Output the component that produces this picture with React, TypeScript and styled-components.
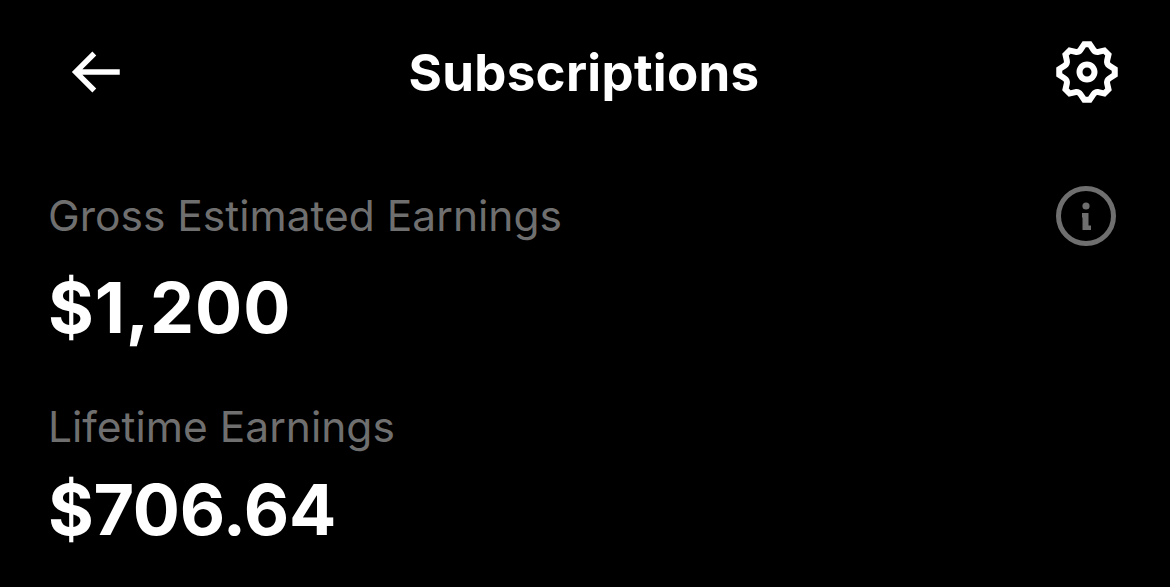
import React from 'react';
import styled, { createGlobalStyle } from 'styled-components';

const GlobalStyle = createGlobalStyle`
  html, body {
    margin: 0;
    background: #000;
  }
`;

const Page = styled.div`
  width: 1170px;
  height: 587px;
  overflow: hidden;
  background: #000;
  color: #fff;
  font-family: 'Inter', 'Liberation Sans', sans-serif;
  padding: 36px 54px 0 48px;
  box-sizing: border-box;
`;

const Header = styled.header`
  display: grid;
  grid-template-columns: 1fr auto 1fr;
  align-items: center;
  height: 72px;
`;

const Title = styled.h1`
  margin: 2px 0 0 4px;
  font-size: 51px;
  font-weight: 700;
  line-height: 70px;
  letter-spacing: 0.3px;
`;

const BackIcon = styled.svg`
  display: block;
  width: 66px;
  height: 66px;
  margin-left: 14px;
  fill: #fff;
`;

const SettingsIcon = styled.svg`
  display: block;
  width: 72px;
  height: 72px;
  justify-self: end;
  margin-right: -6.5px;
  fill: #fff;
`;

const Stat = styled.section<{ $top: number }>`
  margin-top: ${(p) => p.$top}px;
`;

const LabelRow = styled.div`
  display: flex;
  align-items: center;
  justify-content: space-between;
`;

const Label = styled.div`
  font-size: 42.5px;
  line-height: 42px;
  font-weight: 400;
  color: #6f6f6f;
`;

const InfoIcon = styled.svg`
  display: block;
  width: 60px;
  height: 60px;
  fill: none;
  stroke: #6f6f6f;
`;

const Amount = styled.div<{ $spacing: number }>`
  font-size: 70px;
  font-weight: 700;
  line-height: 80px;
  margin-top: 22px;
  letter-spacing: ${(p) => p.$spacing}px;
`;

export default function App() {
  return (
    <>
      <GlobalStyle />
      <Page>
        <Header>
          <BackIcon viewBox="0 0 24 24">
            <path d="M7.414 13l5.043 5.04-1.414 1.42L3.586 12l7.457-7.46 1.414 1.42L7.414 11H21v2H7.414z" />
          </BackIcon>
          <Title>Subscriptions</Title>
          <SettingsIcon viewBox="0 0 24 24">
            <path d="M10.54 1.75h2.92l1.57 2.36c.11.17.32.25.53.21l2.53-.59 2.17 2.17-.58 2.54c-.05.2.04.41.21.53l2.36 1.57v2.92l-2.36 1.57c-.17.12-.26.33-.21.53l.58 2.54-2.17 2.17-2.53-.59c-.21-.04-.42.04-.53.21l-1.57 2.36h-2.92l-1.58-2.36c-.11-.17-.32-.25-.52-.21l-2.54.59-2.17-2.17.58-2.54c.05-.2-.03-.41-.21-.53l-2.35-1.57v-2.92L4.1 8.97c.18-.12.26-.33.21-.53L3.73 5.9 5.9 3.73l2.54.59c.2.04.41-.04.52-.21l1.58-2.36zm1.07 2l-.98 1.47C10.05 6.08 9 6.5 7.99 6.27l-1.46-.34-.6.6.33 1.47c.24 1.01-.18 2.07-1.05 2.64l-1.46.98v.78l1.46.98c.87.57 1.29 1.63 1.05 2.64l-.33 1.47.6.6 1.46-.34c1.01-.23 2.06.19 2.64 1.05l.98 1.47h.78l.97-1.47c.58-.86 1.63-1.28 2.65-1.05l1.45.34.61-.6-.34-1.47c-.23-1.01.18-2.07 1.05-2.64l1.47-.98v-.78l-1.47-.98c-.87-.57-1.28-1.63-1.05-2.64l.34-1.47-.61-.6-1.45.34c-1.02.23-2.07-.19-2.65-1.05l-.97-1.47h-.78zM12 10.5c-.83 0-1.5.67-1.5 1.5s.67 1.5 1.5 1.5c.82 0 1.5-.67 1.5-1.5s-.68-1.5-1.5-1.5zM8.5 12c0-1.93 1.56-3.5 3.5-3.5 1.93 0 3.5 1.57 3.5 3.5s-1.57 3.5-3.5 3.5c-1.94 0-3.5-1.57-3.5-3.5z" />
          </SettingsIcon>
        </Header>
        <Stat $top={78}>
          <LabelRow>
            <Label>Gross Estimated Earnings</Label>
            <InfoIcon viewBox="0 0 60 60">
              <circle cx="30" cy="30" r="27.5" strokeWidth="5" />
              <circle cx="30" cy="20" r="3.6" fill="#6f6f6f" stroke="none" />
              <path d="M26 27h6.5v12.5h2.5v4.5h-8.5V31.5H26z" fill="#6f6f6f" stroke="none" />
            </InfoIcon>
          </LabelRow>
          <Amount $spacing={0.9}>$1,200</Amount>
        </Stat>
        <Stat $top={58}>
          <LabelRow>
            <Label>Lifetime Earnings</Label>
          </LabelRow>
          <Amount $spacing={-0.3}>$706.64</Amount>
        </Stat>
      </Page>
    </>
  );
}
